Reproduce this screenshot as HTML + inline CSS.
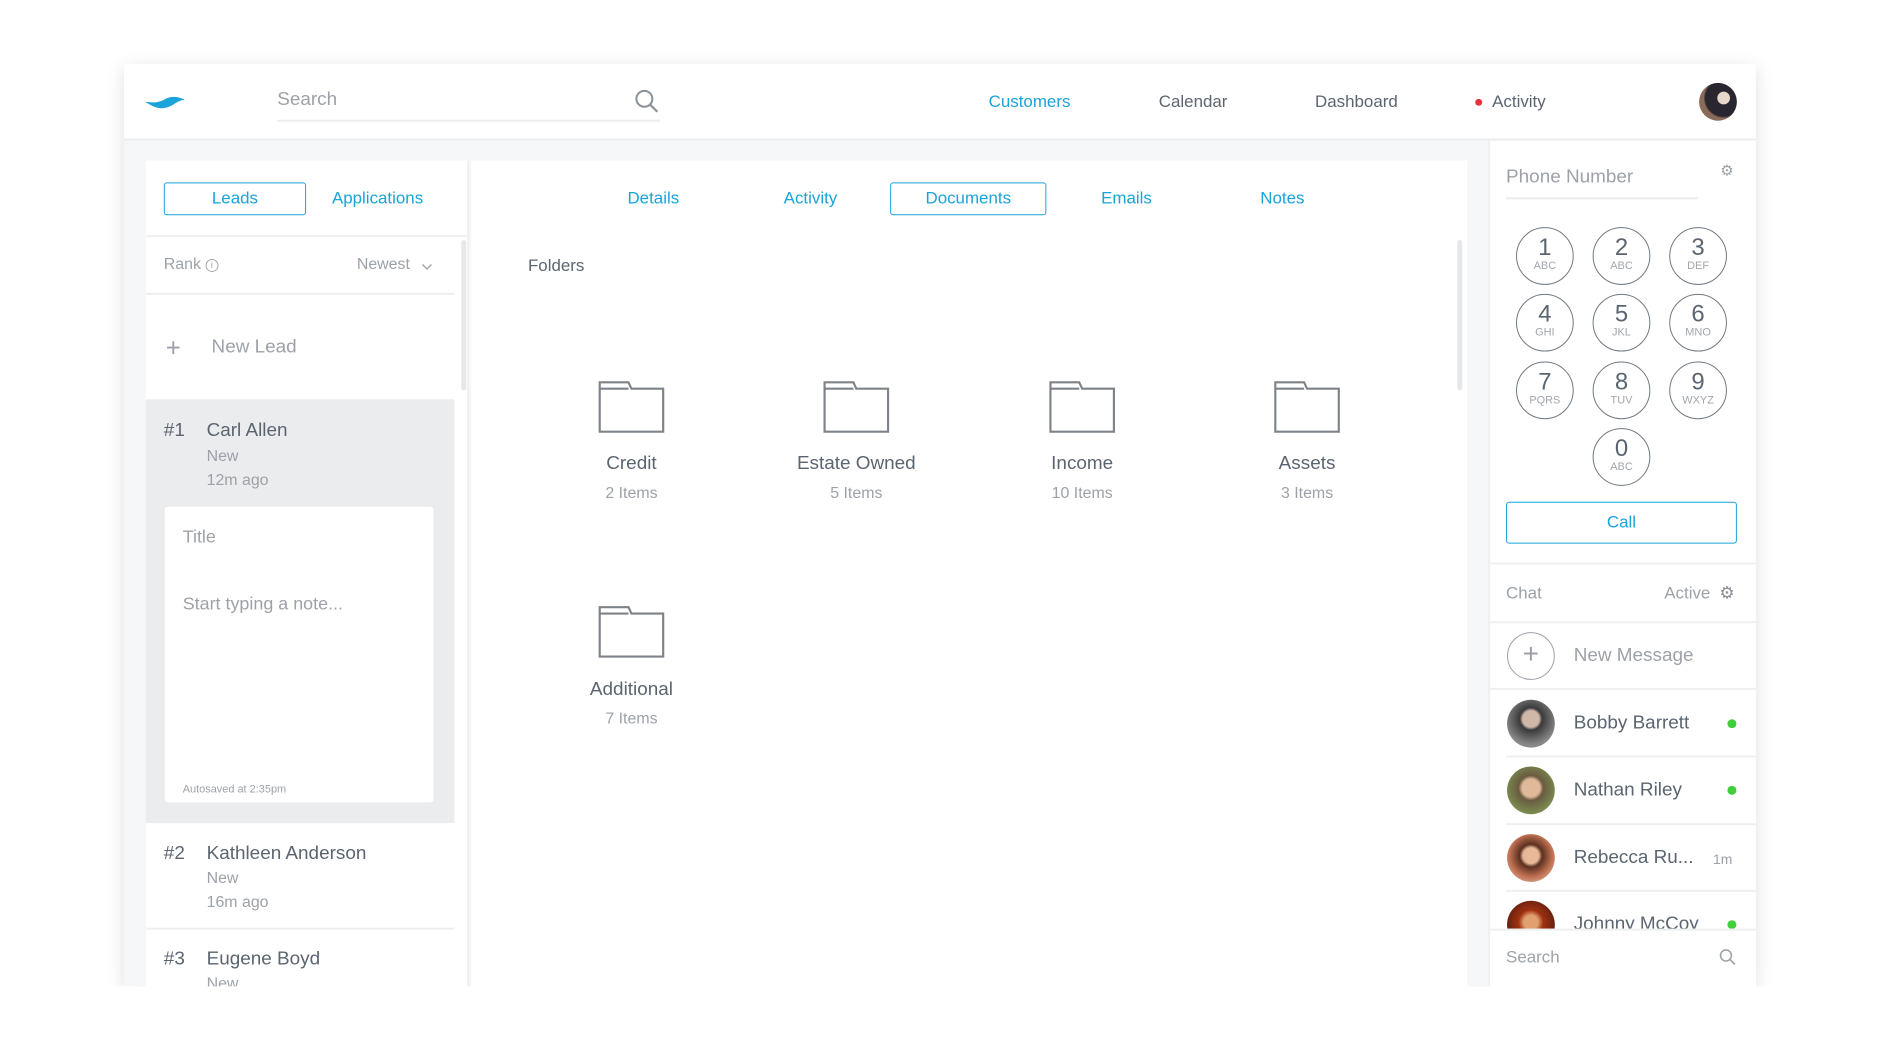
<!DOCTYPE html>
<html><head><meta charset="utf-8"><style>
*{margin:0;padding:0;box-sizing:border-box}
body{width:1880px;height:1050px;background:#fff;font-family:"Liberation Sans",sans-serif;position:relative;overflow:hidden;color:#5b6570}
#w{position:absolute;left:0;top:0;width:1880px;height:1050px;transform:scale(0.995);transform-origin:124px 64px}
.a{position:absolute;white-space:nowrap}
.win{position:absolute;left:124px;top:64px;width:1640px;height:927px;background:#f6f7f8;box-shadow:0 4px 18px rgba(0,0,0,.12);overflow:hidden}
.blue{color:#1ba3da}
.g{color:#9ca2a8}
.c{transform:translate(-50%,-50%)}
.key{position:absolute;width:58px;height:58px;border:1.5px solid #707880;border-radius:50%;text-align:center;transform:translate(-50%,-50%)}
.key b{display:block;font-weight:normal;font-size:24px;color:#5b6570;line-height:24px;margin-top:8px}
.key i{display:block;font-style:normal;font-size:11px;color:#a0a6ac;line-height:12px}
.fold{position:absolute;width:67px;height:53px;transform:translateX(-50%)}
.hr{position:absolute;height:2px;background:#eeeff0}
.av{position:absolute;width:48px;height:48px;border-radius:50%;transform:translate(-50%,-50%)}
.dot{position:absolute;width:9px;height:9px;border-radius:50%;background:#3ecf3a;transform:translate(-50%,-50%)}
</style></head><body>
<div id="w">
<div class="win"></div>
<div class="a" style="left:124px;top:64px;width:1640px;height:77px;background:#fff;border-bottom:2px solid #ececee"></div>
<svg class="a" style="left:144px;top:94px" width="42" height="18" viewBox="0 0 42 18"><path d="M1 8 C8 12 14 16 22 14 C30 12 34 6 41 6 C34 2 26 2 20 6 C14 9 8 9 1 8Z" fill="#1ba3da"/></svg>
<div class="a g" style="left:278px;top:89px;font-size:19px">Search</div>
<div class="a" style="left:278px;top:120px;width:385px;height:2px;background:#ececee"></div>
<svg class="a" style="left:637px;top:89px" width="26" height="26" viewBox="0 0 26 26"><circle cx="10" cy="10" r="8" fill="none" stroke="#8a9096" stroke-width="2"/><path d="M16 16 L23 23" stroke="#8a9096" stroke-width="2.2"/></svg>
<div class="a blue" style="left:993px;top:92px;font-size:17px">Customers</div>
<div class="a" style="left:1164px;top:92px;font-size:17px">Calendar</div>
<div class="a" style="left:1321px;top:92px;font-size:17px">Dashboard</div>
<div class="a" style="left:1482px;top:99px;width:7px;height:7px;border-radius:50%;background:#e8303a"></div>
<div class="a" style="left:1499px;top:92px;font-size:17px">Activity</div>
<div class="av" style="left:1726px;top:102px;width:38px;height:38px;background:radial-gradient(circle at 65% 40%,#e8d8cc 0 18%,#2a2630 20% 55%,#8a6a58 60%)"></div>

<div class="a" style="left:146px;top:161px;width:325px;height:830px;background:#fff;border-right:2px solid #eeeff0"></div>
<div class="a blue" style="left:164px;top:183px;width:143px;height:33px;border:1.5px solid #1ba3da;border-radius:3px;text-align:center;line-height:30px;font-size:17px">Leads</div>
<div class="a blue" style="left:333px;top:189px;font-size:17px">Applications</div>
<div class="hr" style="left:146px;top:236px;width:325px"></div>
<div class="a g" style="left:164px;top:257px;font-size:16px">Rank <span style="border:1px solid #a0a6ac;border-radius:50%;display:inline-block;width:13px;height:13px;line-height:11px;text-align:center;vertical-align:1px;font-size:9px">i</span></div>
<div class="a g" style="left:358px;top:257px;font-size:16px">Newest</div>
<svg class="a" style="left:423px;top:264px" width="11" height="8" viewBox="0 0 11 8"><path d="M1 1.5 L5.5 6 L10 1.5" fill="none" stroke="#9ca2a8" stroke-width="1.3"/></svg>
<div class="hr" style="left:146px;top:294px;width:310px"></div>
<div class="a" style="left:463px;top:241px;width:5px;height:151px;background:#e6e7e9;border-radius:3px"></div>
<div class="a g" style="left:166px;top:334px;font-size:26px;font-weight:300">+</div>
<div class="a g" style="left:212px;top:338px;font-size:19px">New Lead</div>
<div class="a" style="left:146px;top:401px;width:310px;height:426px;background:#ebecee"></div>
<div class="a" style="left:164px;top:422px;font-size:19px">#1</div>
<div class="a" style="left:207px;top:422px;font-size:19px">Carl Allen</div>
<div class="a g" style="left:207px;top:450px;font-size:16px">New</div>
<div class="a g" style="left:207px;top:474px;font-size:16px">12m ago</div>
<div class="a" style="left:165px;top:509px;width:270px;height:297px;background:#fff;border-radius:3px"></div>
<div class="a g" style="left:183px;top:529px;font-size:18px">Title</div>
<div class="a g" style="left:183px;top:596px;font-size:18px">Start typing a note...</div>
<div class="a g" style="left:183px;top:787px;font-size:11px">Autosaved at 2:35pm</div>
<div class="a" style="left:164px;top:847px;font-size:19px">#2</div>
<div class="a" style="left:207px;top:847px;font-size:19px">Kathleen Anderson</div>
<div class="a g" style="left:207px;top:874px;font-size:16px">New</div>
<div class="a g" style="left:207px;top:898px;font-size:16px">16m ago</div>
<div class="hr" style="left:146px;top:932px;width:310px"></div>
<div class="a" style="left:164px;top:953px;font-size:19px">#3</div>
<div class="a" style="left:207px;top:953px;font-size:19px">Eugene Boyd</div>
<div class="a g" style="left:207px;top:980px;font-size:16px">New</div>

<div class="a" style="left:473px;top:161px;width:1001px;height:830px;background:#fff"></div>
<div class="a blue" style="left:630px;top:189px;font-size:17px">Details</div>
<div class="a blue" style="left:787px;top:189px;font-size:17px">Activity</div>
<div class="a blue" style="left:894px;top:183px;width:157px;height:33px;border:1.5px solid #1ba3da;border-radius:3px;text-align:center;line-height:30px;font-size:17px">Documents</div>
<div class="a blue" style="left:1106px;top:189px;font-size:17px">Emails</div>
<div class="a blue" style="left:1266px;top:189px;font-size:17px">Notes</div>
<div class="a" style="left:530px;top:257px;font-size:17px">Folders</div>
<div class="a" style="left:1464px;top:241px;width:5px;height:151px;background:#e6e7e9;border-radius:3px"></div>
<svg width="0" height="0" style="position:absolute"><defs><symbol id="f" viewBox="0 0 68 54"><path d="M1.5 8 V52.5 H66.5 V8.5 H34 L31 2 H1.5 Z M1.5 8.5 H31" fill="none" stroke="#7d8388" stroke-width="2.2"/></symbol></defs></svg>
<svg class="fold" style="left:634px;top:382px"><use href="#f"/></svg>
<svg class="fold" style="left:860px;top:382px"><use href="#f"/></svg>
<svg class="fold" style="left:1087px;top:382px"><use href="#f"/></svg>
<svg class="fold" style="left:1313px;top:382px"><use href="#f"/></svg>
<svg class="fold" style="left:634px;top:608px"><use href="#f"/></svg>
<div class="a c" style="left:634px;top:466px;font-size:19px">Credit</div>
<div class="a c g" style="left:634px;top:496px;font-size:16px">2 Items</div>
<div class="a c" style="left:860px;top:466px;font-size:19px">Estate Owned</div>
<div class="a c g" style="left:860px;top:496px;font-size:16px">5 Items</div>
<div class="a c" style="left:1087px;top:466px;font-size:19px">Income</div>
<div class="a c g" style="left:1087px;top:496px;font-size:16px">10 Items</div>
<div class="a c" style="left:1313px;top:466px;font-size:19px">Assets</div>
<div class="a c g" style="left:1313px;top:496px;font-size:16px">3 Items</div>
<div class="a c" style="left:634px;top:693px;font-size:19px">Additional</div>
<div class="a c g" style="left:634px;top:723px;font-size:16px">7 Items</div>

<div class="a" style="left:1495px;top:141px;width:269px;height:850px;background:#fff;border-left:2px solid #eeeff0"></div>
<div class="a g" style="left:1513px;top:167px;font-size:19px">Phone Number</div>
<div class="a" style="left:1513px;top:198px;width:193px;height:2px;background:#ececee"></div>
<div class="a c g" style="left:1735px;top:171px;font-size:15px">&#9881;</div>
<div class="key" style="left:1552px;top:257px"><b>1</b><i>ABC</i></div>
<div class="key" style="left:1629px;top:257px"><b>2</b><i>ABC</i></div>
<div class="key" style="left:1706px;top:257px"><b>3</b><i>DEF</i></div>
<div class="key" style="left:1552px;top:324px"><b>4</b><i>GHI</i></div>
<div class="key" style="left:1629px;top:324px"><b>5</b><i>JKL</i></div>
<div class="key" style="left:1706px;top:324px"><b>6</b><i>MNO</i></div>
<div class="key" style="left:1552px;top:392px"><b>7</b><i>PQRS</i></div>
<div class="key" style="left:1629px;top:392px"><b>8</b><i>TUV</i></div>
<div class="key" style="left:1706px;top:392px"><b>9</b><i>WXYZ</i></div>
<div class="key" style="left:1629px;top:459px"><b>0</b><i>ABC</i></div>
<div class="a blue" style="left:1513px;top:504px;width:232px;height:42px;border:1.5px solid #1ba3da;border-radius:3px;text-align:center;line-height:39px;font-size:17px">Call</div>
<div class="hr" style="left:1497px;top:565px;width:267px"></div>
<div class="a g" style="left:1513px;top:586px;font-size:17px">Chat</div>
<div class="a g" style="left:1672px;top:586px;font-size:17px">Active</div>
<div class="a c" style="left:1735px;top:596px;font-size:17px;color:#8a9096">&#9881;</div>
<div class="hr" style="left:1497px;top:624px;width:267px"></div>
<div class="av" style="left:1538px;top:659px;border:1.5px solid #9aa0a6;background:#fff;text-align:center;line-height:42px;font-size:28px;color:#9aa0a6;font-weight:300">+</div>
<div class="a g" style="left:1581px;top:648px;font-size:19px">New Message</div>
<div class="hr" style="left:1497px;top:691px;width:267px"></div>
<div class="av" style="left:1538px;top:727px;background:radial-gradient(circle at 50% 40%,#d0b8a8 0 22%,#3a3a3c 30%,#888 70%)"></div>
<div class="a" style="left:1581px;top:716px;font-size:19px">Bobby Barrett</div>
<div class="dot" style="left:1740px;top:727px"></div>
<div class="hr" style="left:1513px;top:759px;width:251px"></div>
<div class="av" style="left:1538px;top:794px;background:radial-gradient(circle at 50% 45%,#e0b89a 0 25%,#6a5a40 35%,#7a8a50 70%)"></div>
<div class="a" style="left:1581px;top:783px;font-size:19px">Nathan Riley</div>
<div class="dot" style="left:1740px;top:794px"></div>
<div class="hr" style="left:1513px;top:827px;width:251px"></div>
<div class="av" style="left:1538px;top:862px;background:radial-gradient(circle at 50% 45%,#e8b898 0 22%,#5a3020 32%,#c07050 60%,#e8d0d0)"></div>
<div class="a" style="left:1581px;top:851px;font-size:19px">Rebecca Ru...</div>
<div class="a g" style="left:1721px;top:855px;font-size:14px">1m</div>
<div class="hr" style="left:1513px;top:894px;width:251px"></div>
<div class="av" style="left:1538px;top:929px;background:radial-gradient(circle at 50% 45%,#e0a070 0 20%,#a03010 35%,#602010 70%)"></div>
<div class="a" style="left:1581px;top:918px;font-size:19px">Johnny McCoy</div>
<div class="dot" style="left:1740px;top:929px"></div>
<div class="a" style="left:1497px;top:933px;width:267px;height:58px;background:#fff;border-top:2px solid #eeeff0"></div>
<div class="a g" style="left:1513px;top:952px;font-size:17px">Search</div>
<svg class="a" style="left:1727px;top:953px" width="18" height="18" viewBox="0 0 18 18"><circle cx="7" cy="7" r="5.5" fill="none" stroke="#9aa0a6" stroke-width="1.5"/><path d="M11 11 L16 16" stroke="#9aa0a6" stroke-width="1.6"/></svg>
<div class="a" style="left:100px;top:991px;width:1700px;height:70px;background:#fff"></div>
</div>
</body></html>
